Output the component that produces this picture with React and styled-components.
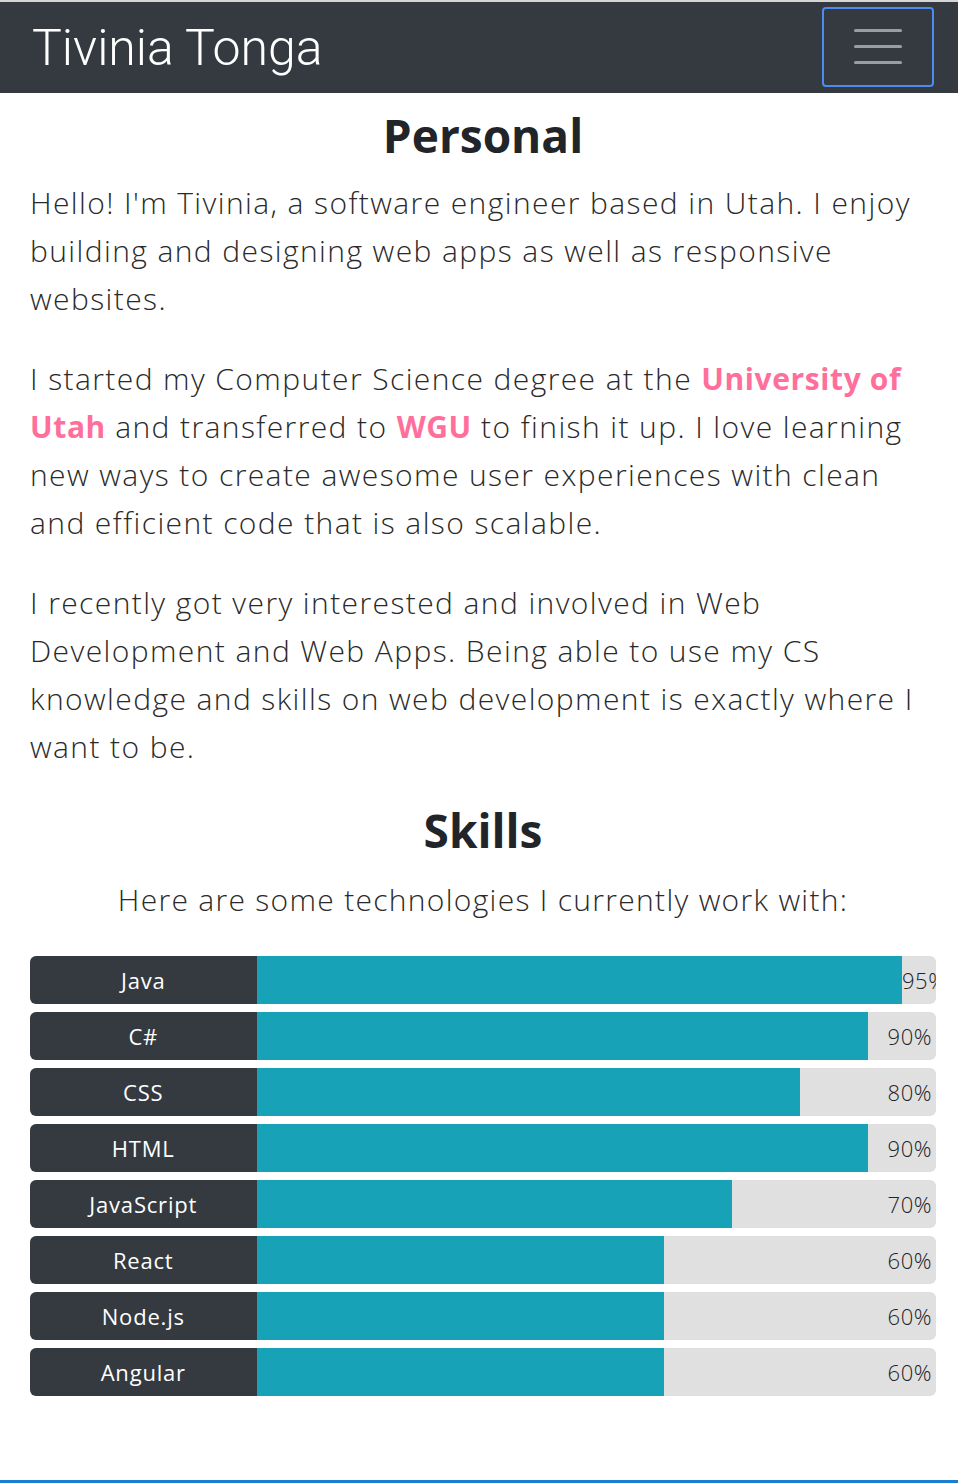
import styled, { createGlobalStyle } from "styled-components";

const GlobalStyle = createGlobalStyle`
  html, body {
    margin: 0;
    padding: 0;
    background: #fff;
  }
  body {
    font-family: "Open Sans", "Lato", sans-serif;
    color: #212529;
    border-top: 2px solid #d6d6d6;
    border-bottom: 3px solid #1a7fd0;
    min-height: 1478px;
  }
`;

const Navbar = styled.nav`
  height: 91px;
  background-color: #343a40;
  display: flex;
  align-items: center;
  justify-content: space-between;
  padding: 0 24px 0 32px;
  box-sizing: border-box;
`;

const Brand = styled.a`
  color: #fff;
  font-family: "Roboto", sans-serif;
  font-size: 50px;
  font-weight: 300;
  text-decoration: none;
`;

const Toggler = styled.button`
  width: 112px;
  height: 80px;
  margin-top: -2px;
  background: transparent;
  border: 2px solid #4b8cf0;
  border-radius: 4px;
  display: flex;
  flex-direction: column;
  align-items: center;
  justify-content: center;
  gap: 13px;
  padding: 0;
`;

const TogglerLine = styled.span`
  display: block;
  width: 48px;
  height: 3px;
  border-radius: 2px;
  background: #9b9ea1;
`;

const Main = styled.main`
  padding: 0 22px 0 30px;
`;

const Heading = styled.h2`
  text-align: center;
  font-size: 46px;
  font-weight: 700;
  margin: ${(p) => p.$top || 0}px 0 ${(p) => p.$bottom || 0}px;
  line-height: 84px;
  color: #212529;
`;

const Paragraphs = styled.div`
  display: flex;
  flex-direction: column;
  gap: 32px;
`;

const Para = styled.p`
  font-size: 30px;
  font-weight: 300;
  line-height: 48px;
  letter-spacing: 1.4px;
  margin: 0;
  color: #2a2a2a;
`;

const Highlight = styled.a`
  color: #ff6f9c;
  font-weight: 700;
  letter-spacing: 0.6px;
  text-decoration: none;
`;

const Subtitle = styled.p`
  text-align: center;
  font-size: 30px;
  font-weight: 300;
  line-height: 48px;
  letter-spacing: 1.3px;
  margin: 0 0 32px;
  color: #2a2a2a;
`;

const SkillList = styled.div`
  display: flex;
  flex-direction: column;
  gap: 8px;
`;

const SkillRow = styled.div`
  display: flex;
  height: 48px;
  border-radius: 6px;
  overflow: hidden;
`;

const SkillLabel = styled.div`
  flex: 0 0 25%;
  background: #343a40;
  color: #fff;
  font-size: 22px;
  letter-spacing: 0.8px;
  display: flex;
  align-items: center;
  justify-content: center;
`;

const Track = styled.div`
  flex: 1;
  background: #e0e0e0;
  position: relative;
  display: flex;
  overflow: hidden;
`;

const Fill = styled.div`
  flex-shrink: 0;
  background: #18a2b8;
  height: 100%;
`;

const Percent = styled.span`
  position: absolute;
  right: 4px;
  top: 0;
  bottom: 0;
  display: flex;
  align-items: center;
  font-size: 22px;
  font-weight: 300;
  letter-spacing: 0.5px;
  color: #222;
`;

const PercentInline = styled.span`
  display: flex;
  align-items: center;
  font-size: 22px;
  font-weight: 300;
  letter-spacing: 0.5px;
  color: #222;
  white-space: nowrap;
`;

const skills = [
  { name: "Java", value: 95 },
  { name: "C#", value: 90 },
  { name: "CSS", value: 80 },
  { name: "HTML", value: 90 },
  { name: "JavaScript", value: 70 },
  { name: "React", value: 60 },
  { name: "Node.js", value: 60 },
  { name: "Angular", value: 60 },
];

export default function App() {
  return (
    <>
      <GlobalStyle />
      <Navbar>
        <Brand href="#">Tivinia Tonga</Brand>
        <Toggler aria-label="menu">
          <TogglerLine />
          <TogglerLine />
          <TogglerLine />
        </Toggler>
      </Navbar>
      <Main>
        <Heading $bottom={2}>Personal</Heading>
        <Paragraphs>
          <Para>
            Hello! I'm Tivinia, a software engineer based in Utah. I enjoy
            building and designing web apps as well as responsive websites.
          </Para>
          <Para>
            I started my Computer Science degree at the{" "}
            <Highlight href="#">University of Utah</Highlight> and transferred
            to <Highlight href="#">WGU</Highlight> to finish it up. I love
            learning new ways to create awesome user experiences with clean and
            efficient code that is also scalable.
          </Para>
          <Para>
            I recently got very interested and involved in Web Development and
            Web Apps. Being able to use my CS knowledge and skills on web
            development is exactly where I want to be.
          </Para>
        </Paragraphs>
        <section>
          <Heading $top={17} $bottom={4}>
            Skills
          </Heading>
          <Subtitle>Here are some technologies I currently work with:</Subtitle>
          <SkillList>
            {skills.map((s) => (
              <SkillRow key={s.name}>
                <SkillLabel>{s.name}</SkillLabel>
                <Track>
                  <Fill style={{ width: `${s.value}%` }} />
                  {s.value > 92 ? (
                    <PercentInline>{s.value}%</PercentInline>
                  ) : (
                    <Percent>{s.value}%</Percent>
                  )}
                </Track>
              </SkillRow>
            ))}
          </SkillList>
        </section>
      </Main>
    </>
  );
}
